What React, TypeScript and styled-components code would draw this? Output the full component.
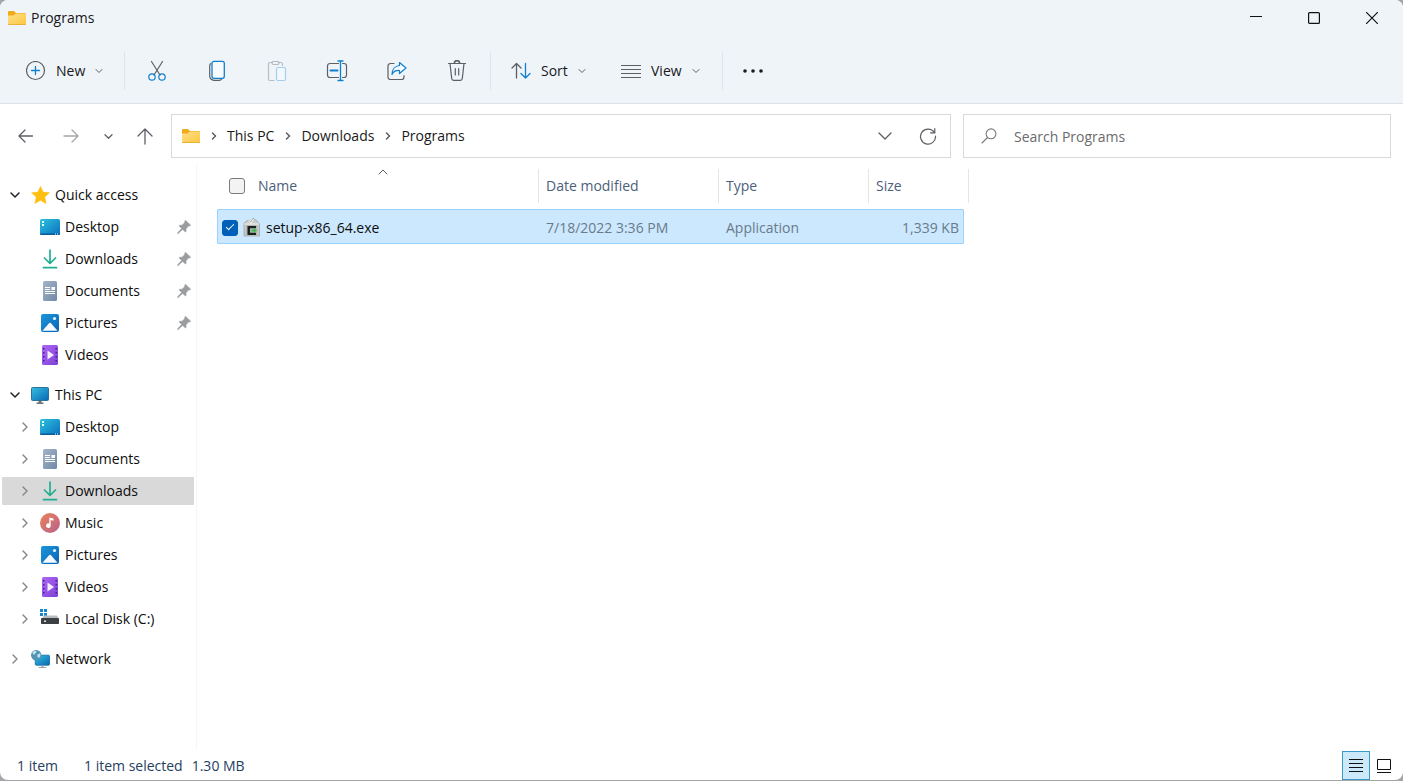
import React, { useState } from "react";
import styled, { createGlobalStyle } from "styled-components";

const GlobalStyle = createGlobalStyle`
  *, *::before, *::after { box-sizing: border-box; }
  body {
    margin: 0;
    background: #a3a5a8;
    color: #191919;
    font-family: "Open Sans", "Noto Sans", sans-serif;
    font-size: 14px;
    line-height: 20px;
  }
  button, input { font: inherit; color: inherit; }
  svg { display: block; flex: none; }
`;

/* ---------- Window frame ---------- */

const Window = styled.div`
  display: flex;
  flex-direction: column;
  min-height: calc(100vh - 1px);
  border-radius: 8px;
  overflow: hidden;
  background: #ffffff;
`;

const Header = styled.header`
  background: #eff4f9;
  border-bottom: 1px solid #dce1e8;
`;

const TitleBar = styled.div`
  display: flex;
  align-items: center;
  justify-content: space-between;
  height: 35px;
  padding: 0 2px 0 8px;
`;

const Title = styled.h1`
  display: flex;
  align-items: center;
  gap: 5px;
  margin: 0;
  font-size: 14px;
  font-weight: 400;
`;

const WindowControls = styled.div`
  display: flex;
`;

const PlainButton = styled.button`
  display: flex;
  align-items: center;
  justify-content: center;
  padding: 0;
  border: 0;
  background: transparent;
`;

const CaptionButton = styled(PlainButton)`
  width: 58px;
  height: 34px;
`;

/* ---------- Command bar ---------- */

const CommandBar = styled.div`
  display: flex;
  align-items: center;
  height: 68px;
  padding: 4px 0 0 16px;
`;

const MenuButton = styled(PlainButton)<{ $width: number }>`
  justify-content: flex-start;
  width: ${(p) => p.$width}px;
  height: 36px;
  padding: 0 10px;
  gap: 10px;
`;

const ToolButton = styled(PlainButton)`
  width: 60px;
  height: 40px;
`;

const Group = styled.div`
  display: flex;
  align-items: center;
  gap: 16px;
  padding: 0 10px;
`;

const ToolGroup = styled.div`
  display: flex;
  padding: 0 3px 0 2px;
`;

const Separator = styled.span`
  width: 1px;
  height: 38px;
  background: #dfe4ea;
`;

/* ---------- Navigation row ---------- */

const NavRow = styled.div`
  display: flex;
  align-items: center;
  gap: 12px;
  padding: 10px 12px 6px 6px;
`;

const NavButtons = styled.div`
  display: flex;
  gap: 5px;
  margin-right: -6px;
`;

const NavButton = styled(PlainButton)<{ $narrow?: boolean }>`
  width: ${(p) => (p.$narrow ? 24 : 40)}px;
  height: 40px;
`;

const Field = styled.div<{ $grow: number }>`
  display: flex;
  align-items: center;
  flex: ${(p) => p.$grow} 1 0;
  min-width: 0;
  height: 44px;
  border: 1px solid #d9d9d9;
  background: #ffffff;
`;

const Crumbs = styled.ol`
  display: flex;
  align-items: center;
  flex: 1;
  margin: 0;
  padding: 0 0 0 10px;
  list-style: none;
`;

const Crumb = styled.li`
  display: flex;
  align-items: center;
`;

const CrumbArrow = styled.span`
  display: flex;
  justify-content: center;
  width: 27px;
`;

const CrumbLink = styled.a`
  color: inherit;
  text-decoration: none;
`;

const FieldButton = styled(PlainButton)`
  width: 43px;
  height: 40px;
`;

const SearchLabel = styled.label`
  display: flex;
  justify-content: center;
  width: 50px;
`;

const SearchInput = styled.input`
  flex: 1;
  min-width: 0;
  height: 40px;
  padding: 0;
  border: 0;
  outline: 0;
  background: transparent;
  &::placeholder { color: #6b6b6b; opacity: 1; }
`;

/* ---------- Body ---------- */

const Body = styled.div`
  display: flex;
  flex: 1;
`;

const Sidebar = styled.nav`
  width: 197px;
  flex: none;
  padding: 15px 2px 0 2px;
  border-right: 1px solid #f6f6f6;
`;

const TreeSection = styled.ul`
  display: flex;
  flex-direction: column;
  gap: 4px;
  margin: 0;
  padding: 2px 0 10px;
  list-style: none;
`;

const TreeRow = styled.li<{ $child?: boolean; $selected?: boolean }>`
  display: flex;
  align-items: center;
  height: 28px;
  padding: 0 3px 0 ${(p) => (p.$child ? 13 : 3)}px;
  border-radius: 1px;
  background: ${(p) => (p.$selected ? "#d9d9d9" : "transparent")};
`;

const Expander = styled(PlainButton)`
  width: 20px;
  height: 24px;
`;

const ExpanderSpace = styled.span`
  width: 20px;
`;

const TreeLink = styled.a<{ $child?: boolean }>`
  display: flex;
  align-items: center;
  flex: 1;
  gap: 5px;
  padding-left: ${(p) => (p.$child ? 5 : 6)}px;
  color: #0d0d0d;
  text-decoration: none;
  white-space: nowrap;
`;

const Main = styled.main`
  flex: 1;
  min-width: 0;
  padding: 5px 0 0 20px;
`;

const FileTable = styled.table`
  display: block;
  width: 752px;
`;

const TableHead = styled.thead`
  display: block;
`;

const TableBody = styled.tbody`
  display: block;
`;

const HeadRow = styled.tr`
  display: grid;
  grid-template-columns: 311px 180px 150px 100px;
  margin: 0 0 6px 11px;
`;

const HeadCell = styled.th`
  position: relative;
  display: flex;
  align-items: center;
  gap: 13px;
  height: 34px;
  padding: 0 0 0 7px;
  border-right: 1px solid #e5e5e5;
  color: #4c607a;
  font-weight: 400;
  &:first-child { padding-left: 1px; }
`;

const SortMark = styled.span`
  position: absolute;
  top: -2px;
  left: 50%;
  transform: translateX(-50%);
`;

const FileRow = styled.tr`
  display: grid;
  grid-template-columns: 321px 180px 150px 1fr;
  margin-right: 5px;
  border: 1px solid #99d1ff;
  border-radius: 1px;
  background: #cce8ff;
`;

const FileCell = styled.td<{ $end?: boolean }>`
  display: flex;
  align-items: center;
  justify-content: ${(p) => (p.$end ? "flex-end" : "flex-start")};
  gap: 5px;
  height: 33px;
  padding: 2px 4px 0 7px;
  color: #6a7a89;
  &:first-child { padding-left: 4px; color: #0d0d0d; }
`;

const CheckBox = styled.input`
  display: grid;
  place-items: center;
  flex: none;
  width: 16px;
  height: 16px;
  margin: 0;
  appearance: none;
  border: 1px solid #7b7b7b;
  border-radius: 3px;
  background: #f3f3f3;
  &:checked { border-color: #005fb8; background: #005fb8; }
  &:checked::after {
    content: "";
    width: 8px;
    height: 4px;
    margin-bottom: 3px;
    border: solid #ffffff;
    border-width: 0 0 1px 1px;
    transform: rotate(-45deg);
  }
`;

/* ---------- Status bar ---------- */

const StatusBar = styled.footer`
  display: flex;
  align-items: center;
  height: 30px;
  padding: 0 5px 0 17px;
  color: #25405f;
`;

const StatusText = styled.span<{ $gap: number }>`
  padding-top: 2px;
  margin-right: ${(p) => p.$gap}px;
`;

const ViewSwitch = styled.div`
  display: flex;
  margin-left: auto;
`;

const ViewButton = styled(PlainButton)<{ $active?: boolean }>`
  width: 28px;
  height: 29px;
  padding-top: 2px;
  border: 1px solid ${(p) => (p.$active ? "#3a9bc8" : "transparent")};
  background: ${(p) => (p.$active ? "#cbe9f8" : "transparent")};
`;

/* ---------- Icons ---------- */

const GREY = "#5c5f63";
const BLUE = "#0f7fcf";

const FolderIcon = () => (
  <svg width="18" height="14" viewBox="0 0 18 14">
    <defs>
      <linearGradient id="folder" x1="0" y1="0" x2="1" y2="1">
        <stop offset="0" stopColor="#ffe08a" />
        <stop offset="1" stopColor="#fbc740" />
      </linearGradient>
    </defs>
    <path d="M0 1a1 1 0 0 1 1-1h5l2 2h9a1 1 0 0 1 1 1v6H0z" fill="#f0ab1c" />
    <path d="M0 4.500h5.500L8 2.500h9.200a.8.800 0 0 1 .8.800V13a1 1 0 0 1-1 1H1a1 1 0 0 1-1-1z" fill="url(#folder)" />
    <path d="M0 13h18a1 1 0 0 1-1 1H1a1 1 0 0 1-1-1z" fill="#eab038" />
  </svg>
);

const Chevron = ({ dir, size = 8, color = GREY, stroke = 1.2 }: { dir: "down" | "right" | "up"; size?: number; color?: string; stroke?: number }) => {
  const h = size / 2;
  const box = size + 2;
  const lo = 1 + size / 4;
  const hi = lo + h;
  const paths = {
    down: `M1 ${lo}L${1 + h} ${hi}L${1 + size} ${lo}`,
    up: `M1 ${hi}L${1 + h} ${lo}L${1 + size} ${hi}`,
    right: `M${lo} 1L${hi} ${1 + h}L${lo} ${1 + size}`,
  };
  return (
    <svg width={box} height={box} viewBox={`0 0 ${box} ${box}`} fill="none" stroke={color} strokeWidth={stroke} strokeLinecap="round" strokeLinejoin="round">
      <path d={paths[dir]} />
    </svg>
  );
};

const NewIcon = () => (
  <svg width="20" height="20" viewBox="0 0 20 20" fill="none">
    <circle cx="9.500" cy="9.500" r="9" stroke={GREY} strokeWidth="1.200" />
    <path d="M9.500 5.500v8M5.500 9.500h8" stroke={BLUE} strokeWidth="1.300" strokeLinecap="round" />
  </svg>
);

const CutIcon = () => (
  <svg width="20" height="22" viewBox="0 0 20 22" fill="none" strokeWidth="1.200" strokeLinecap="round">
    <path d="M4.500 1.500L13 15M15.500 1.500L7 15" stroke={GREY} />
    <circle cx="5" cy="17" r="3.200" stroke={BLUE} />
    <circle cx="15" cy="17" r="3.200" stroke={BLUE} />
  </svg>
);

const CopyIcon = () => (
  <svg width="18" height="22" viewBox="0 0 18 22" fill="none">
    <path d="M3 3.500C2 3.900 1.700 4.700 1.700 6v10a4.300 4.300 0 0 0 4.300 4.300h5c1.400 0 2.300-.6 2.700-1.300" stroke={GREY} strokeWidth="1.200" strokeLinecap="round" />
    <rect x="4" y="1.300" width="12.300" height="17" rx="2" fill="#f8fbfe" stroke={BLUE} strokeWidth="1.300" />
  </svg>
);

const PasteIcon = () => (
  <svg width="20" height="22" viewBox="0 0 20 22" fill="none" strokeWidth="1.200">
    <path d="M7 20.500H3A1.500 1.500 0 0 1 1.500 19V4A1.500 1.500 0 0 1 3 2.500h2M12 2.500h2A1.500 1.500 0 0 1 15.500 4v1.500" stroke="#b9bec4" strokeLinecap="round" />
    <rect x="5" y="1.500" width="7" height="3" rx="1.500" stroke="#b3b8be" />
    <rect x="9.500" y="7.500" width="9" height="13" rx="1.500" fill="#f2f8fd" stroke="#a6cdec" />
  </svg>
);

const RenameIcon = () => (
  <svg width="22" height="22" viewBox="0 0 22 22" fill="none" strokeLinecap="round">
    <path d="M12.500 3.500H4A2.500 2.500 0 0 0 1.500 6v9A2.500 2.500 0 0 0 4 17.500h8.500M16.500 3.500h1.500A2.500 2.500 0 0 1 20.500 6v9a2.500 2.500 0 0 1-2.500 2.500h-1.500" stroke={GREY} strokeWidth="1.200" />
    <path d="M4.500 10.500h7" stroke={BLUE} strokeWidth="2" />
    <path d="M14.500 1v19M12 1h5M12 20.500h5" stroke={BLUE} strokeWidth="1.300" />
  </svg>
);

const ShareIcon = () => (
  <svg width="20" height="20" viewBox="0 0 20 20" fill="none" strokeLinecap="round" strokeLinejoin="round">
    <path d="M7 2.500H3.500a2.500 2.500 0 0 0-2.500 2.500v11a2.500 2.500 0 0 0 2.500 2.500h11a2.500 2.500 0 0 0 2.500-2.500v-1.500" stroke={GREY} strokeWidth="1.200" />
    <path d="M12.500 1.500l6.500 5.500-6.500 5.500V9.500C9 9.200 6.500 10.500 5 13.500c0-5 3-8.500 7.500-9z" stroke={BLUE} strokeWidth="1.200" fill="#f5faff" />
  </svg>
);

const DeleteIcon = () => (
  <svg width="20" height="22" viewBox="0 0 20 22" fill="none" stroke={GREY} strokeWidth="1.200" strokeLinecap="round">
    <path d="M1.500 3.500h17M3 3.500l1.700 15a2 2 0 0 0 2 1.900h6.600a2 2 0 0 0 2-1.900L17 3.500" />
    <path d="M7.300 3.300a2.700 2.700 0 0 1 5.400 0" strokeWidth="1.600" />
    <path d="M8.300 8.500v6.500M11.700 8.500v6.500" />
  </svg>
);

const SortIcon = () => (
  <svg width="20" height="18" viewBox="0 0 20 18" fill="none" strokeWidth="1.300" strokeLinecap="round" strokeLinejoin="round">
    <path d="M5.500 16V1.500M1 6l4.500-4.500L10 6" stroke={GREY} />
    <path d="M14.500 1.500V16M10 11.500l4.500 4.500 4.500-4.500" stroke={BLUE} />
  </svg>
);

const ViewIcon = () => (
  <svg width="20" height="14" viewBox="0 0 20 14" stroke={GREY} strokeWidth="1">
    <path d="M0 1.500h20M0 5.500h20M0 9.500h20M0 13.500h20" />
  </svg>
);

const MoreIcon = () => (
  <svg width="20" height="4" viewBox="0 0 20 4" fill="#1b1b1b">
    <circle cx="2" cy="2" r="1.800" />
    <circle cx="10" cy="2" r="1.800" />
    <circle cx="18" cy="2" r="1.800" />
  </svg>
);

const ArrowIcon = ({ dir, color = GREY }: { dir: "left" | "right" | "up"; color?: string }) => {
  const paths = {
    left: "M15.500 9H2M8 3L2 9l6 6",
    right: "M2 9h14M10 3l6 6-6 6",
    up: "M9 17V2M2 9l7-7 7 7",
  };
  return (
    <svg width="18" height="18" viewBox="0 0 18 18" fill="none" stroke={color} strokeWidth="1.300" strokeLinecap="round" strokeLinejoin="round">
      <path d={paths[dir]} />
    </svg>
  );
};

const RefreshIcon = () => (
  <svg width="18" height="18" viewBox="0 0 18 18" fill="none" stroke={GREY} strokeWidth="1.200" strokeLinecap="round">
    <path d="M15.300 5.500A7.500 7.500 0 1 0 16.500 9M15.800 1.500v4.300h-4.300" />
  </svg>
);

const SearchIcon = () => (
  <svg width="16" height="16" viewBox="0 0 16 16" fill="none" stroke="#77797c" strokeWidth="1.100" strokeLinecap="round">
    <circle cx="10" cy="5.800" r="4.900" />
    <path d="M6.500 9.500L1 15" />
  </svg>
);

const StarIcon = () => (
  <svg width="19" height="18" viewBox="0 0 19 18">
    <path d="M9.500.4l2.600 5.700 6.300.7-4.700 4.200 1.400 6.600-5.600-3.300-5.600 3.300 1.400-6.600L.6 6.800l6.300-.7z" fill="#fdc010" stroke="#fdc010" strokeWidth=".6" strokeLinejoin="round" />
  </svg>
);

const DesktopIcon = () => (
  <svg width="20" height="16" viewBox="0 0 20 16">
    <defs>
      <linearGradient id="desk" x1="0" y1="0" x2="1" y2="1">
        <stop offset="0" stopColor="#2cc3de" />
        <stop offset="1" stopColor="#0b6fbd" />
      </linearGradient>
    </defs>
    <rect width="20" height="16" rx="1.500" fill="url(#desk)" />
    <path d="M0 14.500h20a1.500 1.500 0 0 1-1.500 1.500h-17A1.500 1.500 0 0 1 0 14.500z" fill="#0a5a9c" />
    <path d="M2 2h2v2H2zM2 5h2v2H2zM15 14.500h1v1h-1zM17 14.500h1v1h-1z" fill="#e8fbff" />
  </svg>
);

const DownloadIcon = () => (
  <svg width="20" height="20" viewBox="0 0 20 20" fill="none" stroke="#1fae92" strokeWidth="1.700" strokeLinecap="round" strokeLinejoin="round">
    <path d="M10 1v13M4.500 9l5.500 5.500L15.500 9M3.500 18.700h13" />
  </svg>
);

const DocumentIcon = () => (
  <svg width="20" height="20" viewBox="0 0 20 20">
    <defs>
      <linearGradient id="doc" x1="0" y1="0" x2="1" y2="1">
        <stop offset="0" stopColor="#a3b5c9" />
        <stop offset="1" stopColor="#7288a6" />
      </linearGradient>
    </defs>
    <rect x="3" y="0" width="14" height="20" rx="1.500" fill="url(#doc)" />
    <path d="M5 6h5v1H5zM5 8h5v1H5zM5 10h10v1H5zM5 12h10v1H5zM11.500 6H15v3h-3.500z" fill="#ffffff" />
  </svg>
);

const PictureIcon = () => (
  <svg width="20" height="18" viewBox="0 0 20 18">
    <defs>
      <linearGradient id="pic" x1="0" y1="0" x2="1" y2="1">
        <stop offset="0" stopColor="#1c97dc" />
        <stop offset="1" stopColor="#0a62b4" />
      </linearGradient>
    </defs>
    <rect x="1" width="18" height="18" rx="2" fill="url(#pic)" />
    <path d="M2.500 16.800l6.300-7.300a1.600 1.600 0 0 1 2.400 0l6.300 7.300z" fill="#f4fbff" />
    <circle cx="14.500" cy="4.500" r="1.600" fill="#e2f6ff" />
  </svg>
);

const VideoIcon = () => (
  <svg width="20" height="20" viewBox="0 0 20 20">
    <defs>
      <linearGradient id="vid" x1="0" y1="0" x2="1" y2="1">
        <stop offset="0" stopColor="#ad66f2" />
        <stop offset="1" stopColor="#7f42d6" />
      </linearGradient>
    </defs>
    <rect x="2" width="16" height="20" rx="1.500" fill="url(#vid)" />
    <path d="M3 3h1.500v1.500H3zM3 7h1.500v1.500H3zM3 11h1.500v1.500H3zM3 15h1.500v1.500H3zM15.500 3H17v1.500h-1.500zM15.500 7H17v1.500h-1.500zM15.500 11H17v1.500h-1.500zM15.500 15H17v1.500h-1.500z" fill="#44208a" />
    <path d="M7.500 5.500l6.500 4.500-6.500 4.500z" fill="#f6ecff" />
  </svg>
);

const MusicIcon = () => (
  <svg width="20" height="20" viewBox="0 0 20 20">
    <defs>
      <linearGradient id="mus" x1="0" y1="0" x2="1" y2="1">
        <stop offset="0" stopColor="#ea8356" />
        <stop offset="1" stopColor="#b9608f" />
      </linearGradient>
    </defs>
    <circle cx="10" cy="10" r="10" fill="url(#mus)" />
    <path d="M9.300 4.500l4.200 1v2.300L10.700 7v5.700a2.300 2.300 0 1 1-1.400-2.100z" fill="#ffffff" />
  </svg>
);

const MonitorIcon = () => (
  <svg width="19" height="17" viewBox="0 0 19 17">
    <defs>
      <linearGradient id="mon" x1="0" y1="0" x2="1" y2="1">
        <stop offset="0" stopColor="#35bfe0" />
        <stop offset="1" stopColor="#0a68b3" />
      </linearGradient>
    </defs>
    <rect x=".5" y=".5" width="17" height="13" rx="1" fill="url(#mon)" stroke="#2f7295" />
    <path d="M7.500 14h3v1.500h2V17h-7v-1.500h2z" fill="#6d7479" />
  </svg>
);

const DiskIcon = () => (
  <svg width="20" height="20" viewBox="0 0 20 20">
    <path d="M0 0h3v3H0zM4 0h3v3H4zM0 4h3v3H0zM4 4h3v3H4z" fill="#1687cf" />
    <path d="M4 6.500h13l1.500 3H2z" fill="#b9bcbe" />
    <rect x="1" y="9" width="18" height="6" rx=".8" fill="#3c4043" />
    <rect x="4" y="11.500" width="2" height="1.500" fill="#d5e9ef" />
  </svg>
);

const NetworkIcon = () => (
  <svg width="19" height="18" viewBox="0 0 20 19">
    <rect x="4.500" y="5.500" width="15" height="10.500" rx="1" fill="url(#mon)" stroke="#1b78ad" />
    <path d="M11 16.500h2V18h3v1H8v-1h3z" fill="#9aa3a9" />
    <circle cx="5.500" cy="5.500" r="5.500" fill="#5393b4" />
    <path d="M1.500 2.500C3 1 5 .8 6 1.500 5.500 3 4 3.500 3.500 5 2.500 5 1.500 4 1.500 2.500zM6.500 5l3-1.500c.8 1.500.5 3-.5 4.500L7 8z" fill="#c4e2ee" />
  </svg>
);

const PinIcon = () => (
  <svg width="14" height="14" viewBox="0 0 14 14" fill="#9a9da0">
    <path d="M8.700.6l4.700 4.300c.3.300.1.700-.3.800l-1.700.4-2.300 2.600-.1 2.700c0 .5-.5.700-.8.400L5.600 9.400 1.200 13.500l-.7.100.1-.7 4-4.500-2.300-2.300c-.3-.3-.1-.8.300-.8l2.600-.1 2.400-2.500.3-1.800c.1-.4.500-.6.800-.3z" stroke="#9a9da0" strokeWidth=".6" />
  </svg>
);

const SetupIcon = () => (
  <svg width="18" height="19" viewBox="0 0 18 19">
    <path d="M1 5l4-3 3 2 2-4 4 3 2.500 3v12H1z" fill="#c9cbca" stroke="#999c9b" strokeWidth=".7" />
    <path d="M5.500 2.500l2.500 3 2.500-4.500M1 6h15" fill="none" stroke="#f1f1ef" strokeWidth="1" />
    <path d="M3 7h11.500v10.500H3z" fill="#b5b8b5" />
    <path d="M13 8H4.500v9H13v-2.200H7v-4.500h6z" fill="#15231a" />
    <path d="M8.500 11.500h2.800v-1L14 12.500l-2.700 2v-1H8.500z" fill="#39b84b" />
  </svg>
);

const MinimizeIcon = () => (
  <svg width="12" height="12" viewBox="0 0 12 12" stroke="#111111"><path d="M0 4.500h12" /></svg>
);
const MaximizeIcon = () => (
  <svg width="12" height="12" viewBox="0 0 12 12" fill="none" stroke="#111111" strokeWidth="1.200"><rect x=".6" y=".6" width="10.800" height="10.800" rx="1" /></svg>
);
const CloseIcon = () => (
  <svg width="12" height="12" viewBox="0 0 12 12" stroke="#111111" strokeWidth="1.200"><path d="M0 0l12 12M12 0L0 12" /></svg>
);

const DetailsIcon = () => (
  <svg width="14" height="14" viewBox="0 0 14 14" stroke="#111111"><path d="M0 .5h14M0 4.500h14M0 8.500h14M0 12.500h14" /></svg>
);
const LargeIcon = () => (
  <svg width="14" height="14" viewBox="0 0 14 14" fill="none" stroke="#111111"><path d="M.5.5h13v10H.5zM0 13.500h14" /></svg>
);

/* ---------- Data ---------- */

type Place = { name: string; icon: React.ReactNode; pinned?: boolean; selected?: boolean };
type Section = Place & { open: boolean; expandable: boolean; children: Place[] };

const sections: Section[] = [
  {
    name: "Quick access", icon: <StarIcon />, open: true, expandable: false,
    children: [
      { name: "Desktop", icon: <DesktopIcon />, pinned: true },
      { name: "Downloads", icon: <DownloadIcon />, pinned: true },
      { name: "Documents", icon: <DocumentIcon />, pinned: true },
      { name: "Pictures", icon: <PictureIcon />, pinned: true },
      { name: "Videos", icon: <VideoIcon /> },
    ],
  },
  {
    name: "This PC", icon: <MonitorIcon />, open: true, expandable: true,
    children: [
      { name: "Desktop", icon: <DesktopIcon /> },
      { name: "Documents", icon: <DocumentIcon /> },
      { name: "Downloads", icon: <DownloadIcon />, selected: true },
      { name: "Music", icon: <MusicIcon /> },
      { name: "Pictures", icon: <PictureIcon /> },
      { name: "Videos", icon: <VideoIcon /> },
      { name: "Local Disk (C:)", icon: <DiskIcon /> },
    ],
  },
  { name: "Network", icon: <NetworkIcon />, open: false, expandable: true, children: [] },
];

const tools = [
  { name: "Cut", icon: <CutIcon /> },
  { name: "Copy", icon: <CopyIcon /> },
  { name: "Paste", icon: <PasteIcon />, disabled: true },
  { name: "Rename", icon: <RenameIcon /> },
  { name: "Share", icon: <ShareIcon /> },
  { name: "Delete", icon: <DeleteIcon /> },
];

const Tree = () => (
  <Sidebar aria-label="Folders">
    {sections.map((s) => (
      <TreeSection key={s.name}>
        <TreeRow>
          <Expander aria-label={`Toggle ${s.name}`} aria-expanded={s.open}>
            {s.open ? <Chevron dir="down" color="#222222" stroke={1.5} /> : <Chevron dir="right" color="#858585" stroke={1.4} />}
          </Expander>
          <TreeLink href="#">{s.icon}{s.name}</TreeLink>
        </TreeRow>
        {s.children.map((c) => (
          <TreeRow key={c.name} $child $selected={c.selected}>
            {s.expandable ? (
              <Expander aria-label={`Expand ${c.name}`}><Chevron dir="right" color="#858585" stroke={1.4} /></Expander>
            ) : (
              <ExpanderSpace />
            )}
            <TreeLink href="#" $child>{c.icon}{c.name}</TreeLink>
            {c.pinned && <PinIcon />}
          </TreeRow>
        ))}
      </TreeSection>
    ))}
  </Sidebar>
);

export default function App() {
  const [checked, setChecked] = useState(true);
  return (
    <>
      <GlobalStyle />
      <Window>
        <Header>
          <TitleBar>
            <Title><FolderIcon />Programs</Title>
            <WindowControls>
              <CaptionButton aria-label="Minimize"><MinimizeIcon /></CaptionButton>
              <CaptionButton aria-label="Maximize"><MaximizeIcon /></CaptionButton>
              <CaptionButton aria-label="Close"><CloseIcon /></CaptionButton>
            </WindowControls>
          </TitleBar>
          <CommandBar>
            <MenuButton $width={108}><NewIcon />New<Chevron dir="down" size={6} stroke={1} /></MenuButton>
            <Separator />
            <ToolGroup>
              {tools.map((t) => (
                <ToolButton key={t.name} aria-label={t.name} disabled={t.disabled}>{t.icon}</ToolButton>
              ))}
            </ToolGroup>
            <Separator />
            <Group>
              <MenuButton $width={94}><SortIcon />Sort<Chevron dir="down" size={6} stroke={1} /></MenuButton>
              <MenuButton $width={101}><ViewIcon />View<Chevron dir="down" size={6} stroke={1} /></MenuButton>
            </Group>
            <Separator />
            <ToolButton aria-label="See more"><MoreIcon /></ToolButton>
          </CommandBar>
        </Header>

        <NavRow>
          <NavButtons>
            <NavButton aria-label="Back"><ArrowIcon dir="left" /></NavButton>
            <NavButton aria-label="Forward"><ArrowIcon dir="right" color="#a3a5a7" /></NavButton>
            <NavButton aria-label="Recent locations" $narrow><Chevron dir="down" size={7} stroke={1.3} /></NavButton>
            <NavButton aria-label="Up"><ArrowIcon dir="up" /></NavButton>
          </NavButtons>
          <Field $grow={42}>
            <Crumbs>
              <Crumb><FolderIcon /></Crumb>
              {["This PC", "Downloads", "Programs"].map((c) => (
                <Crumb key={c}>
                  <CrumbArrow><Chevron dir="right" size={6} stroke={1.5} /></CrumbArrow>
                  <CrumbLink href="#">{c}</CrumbLink>
                </Crumb>
              ))}
            </Crumbs>
            <FieldButton aria-label="Previous locations"><Chevron dir="down" size={12} stroke={1.3} /></FieldButton>
            <FieldButton aria-label="Refresh"><RefreshIcon /></FieldButton>
          </Field>
          <Field $grow={23}>
            <SearchLabel htmlFor="search" aria-label="Search Programs"><SearchIcon /></SearchLabel>
            <SearchInput id="search" type="text" placeholder="Search Programs" />
          </Field>
        </NavRow>

        <Body>
          <Tree />
          <Main>
            <FileTable>
              <TableHead>
                <HeadRow>
                  <HeadCell>
                    <CheckBox type="checkbox" aria-label="Select all" />
                    Name
                    <SortMark><Chevron dir="up" size={8} stroke={1} /></SortMark>
                  </HeadCell>
                  <HeadCell>Date modified</HeadCell>
                  <HeadCell>Type</HeadCell>
                  <HeadCell>Size</HeadCell>
                </HeadRow>
              </TableHead>
              <TableBody>
                <FileRow>
                  <FileCell>
                    <CheckBox type="checkbox" aria-label="Select setup-x86_64.exe" checked={checked} onChange={(e) => setChecked(e.target.checked)} />
                    <SetupIcon />
                    setup-x86_64.exe
                  </FileCell>
                  <FileCell>7/18/2022 3:36 PM</FileCell>
                  <FileCell>Application</FileCell>
                  <FileCell $end>1,339 KB</FileCell>
                </FileRow>
              </TableBody>
            </FileTable>
          </Main>
        </Body>

        <StatusBar>
          <StatusText $gap={26}>1 item</StatusText>
          <StatusText $gap={9}>1 item selected</StatusText>
          <StatusText $gap={0}>1.30 MB</StatusText>
          <ViewSwitch>
            <ViewButton $active aria-label="Details view"><DetailsIcon /></ViewButton>
            <ViewButton aria-label="Large icons view"><LargeIcon /></ViewButton>
          </ViewSwitch>
        </StatusBar>
      </Window>
    </>
  );
}
